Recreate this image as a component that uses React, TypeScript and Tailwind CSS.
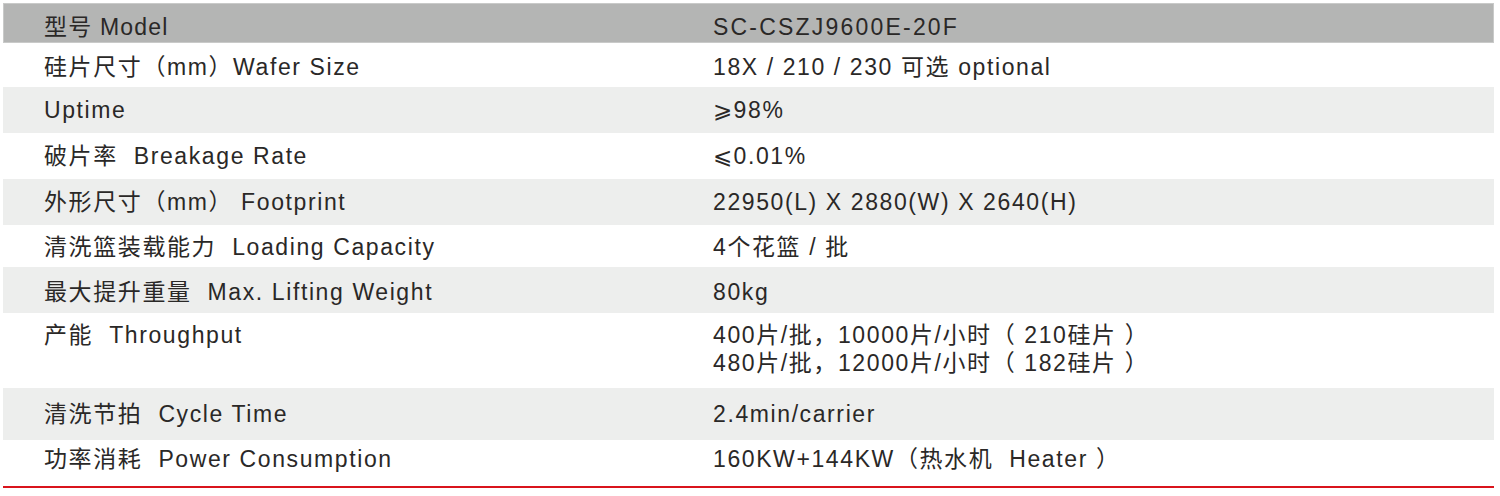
import clsx from 'clsx';

interface Spec {
  label: string;
  value: string[];
  rowClass: string;
}

const specs: Spec[] = [
  { label: '硅片尺寸（mm）Wafer Size', value: ['18X / 210 / 230 可选 optional'], rowClass: 'h-[44px] pt-[10px] bg-white' },
  { label: 'Uptime', value: ['⩾98%'], rowClass: 'h-[46px] pt-[9px] bg-[#edeeed]' },
  { label: '破片率  Breakage Rate', value: ['⩽0.01%'], rowClass: 'h-[46px] pt-[9px] bg-white' },
  { label: '外形尺寸（mm） Footprint', value: ['22950(L) X 2880(W) X 2640(H)'], rowClass: 'h-[46px] pt-[9px] bg-[#edeeed]' },
  { label: '清洗篮装载能力  Loading Capacity', value: ['4个花篮 / 批'], rowClass: 'h-[42px] pt-[8px] bg-white' },
  { label: '最大提升重量  Max. Lifting Weight', value: ['80kg'], rowClass: 'h-[46px] pt-[11px] bg-[#edeeed]' },
  {
    label: '产能  Throughput',
    value: ['400片/批，10000片/小时（ 210硅片 ）', '480片/批，12000片/小时（ 182硅片 ）'],
    rowClass: 'h-[75px] pt-[8px] bg-white',
  },
  { label: '清洗节拍  Cycle Time', value: ['2.4min/carrier'], rowClass: 'h-[52px] pt-[12px] bg-[#edeeed]' },
  { label: '功率消耗  Power Consumption', value: ['160KW+144KW（热水机  Heater ）'], rowClass: 'h-[46px] pt-[5px] bg-white' },
];

const SpecRow = ({ spec }: { spec: Spec }) => {
  return (
    <div className={clsx('flex', spec.rowClass)}>
      <div className="w-[710px] pl-[41px] whitespace-pre">{spec.label}</div>
      <div className="flex flex-col whitespace-pre">
        {spec.value.map((line) => (
          <span key={line}>{line}</span>
        ))}
      </div>
    </div>
  );
};

export default function App() {
  return (
    <div className="w-[1500px] h-[496px] bg-white pt-[3px]">
      <div
        className="ml-[3px] w-[1491px] text-[23px] leading-[28px] tracking-[1.6px] text-[#2a2827]"
        style={{ fontFamily: '"Liberation Sans", "Noto Sans CJK SC", sans-serif' }}
      >
        {/* Header */}
        <div className="flex h-[40px] pt-[9px] bg-[#b4b5b4] border border-[#c9cac9]">
          <div className="w-[709px] pl-[40px] tracking-[1.2px]">型号 Model</div>
          <div className="tracking-[2.2px]">SC-CSZJ9600E-20F</div>
        </div>

        {specs.map((spec) => (
          <SpecRow key={spec.label} spec={spec} />
        ))}

        <div className="h-[2px] bg-[#d9141c]" />
      </div>
    </div>
  );
}
